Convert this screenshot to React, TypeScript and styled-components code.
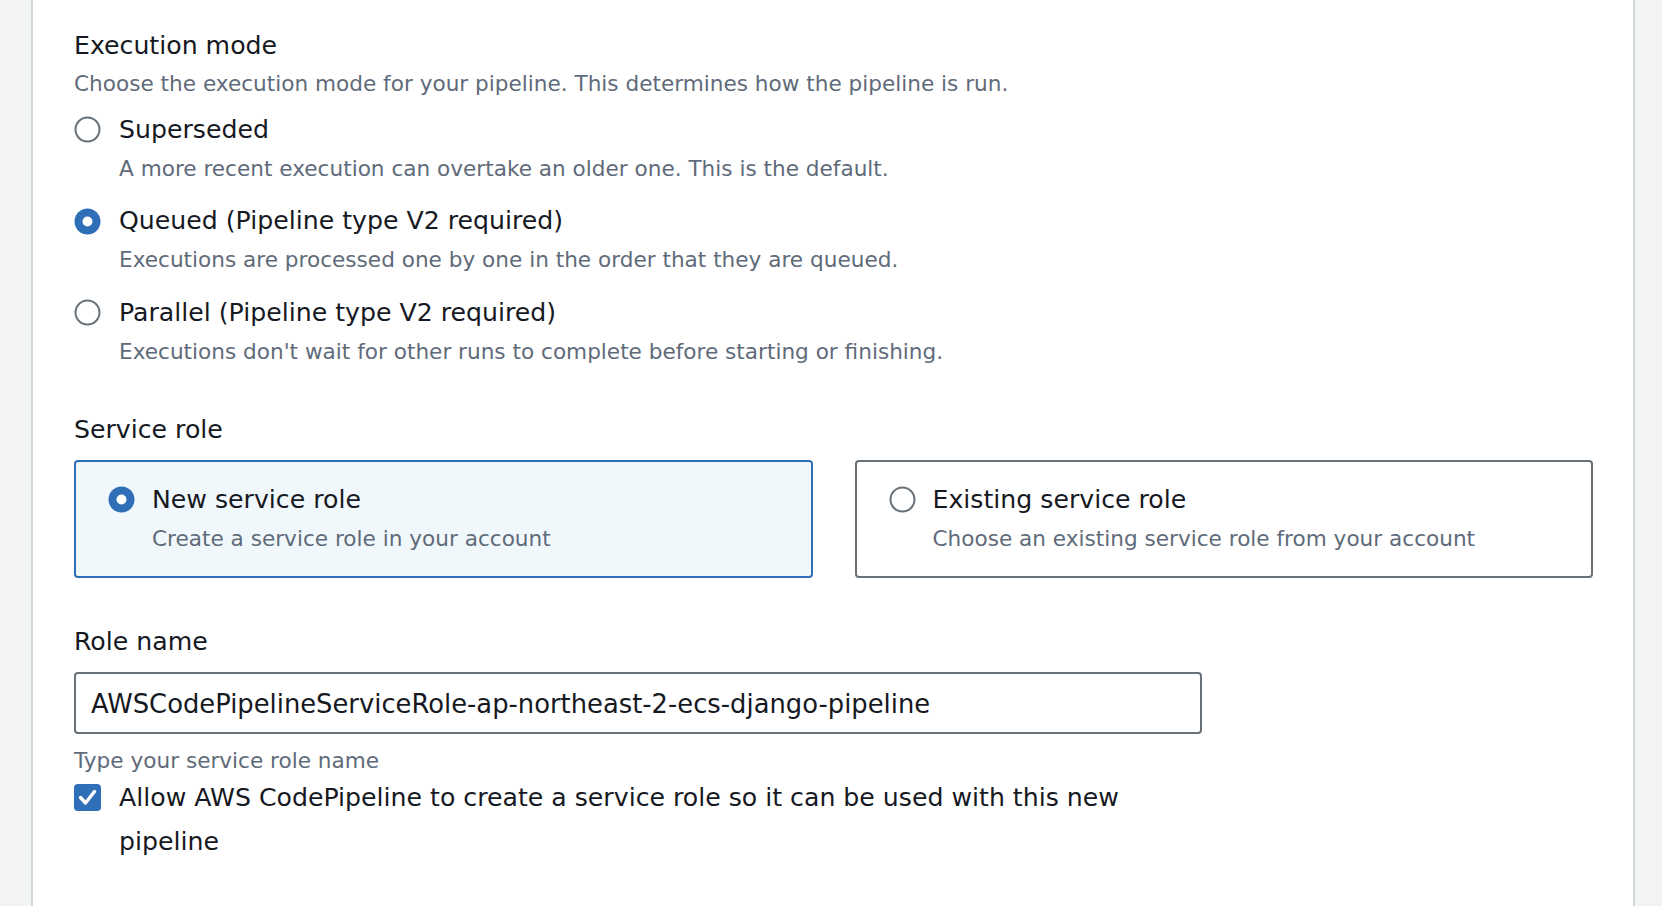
import React from "react";
import styled, { createGlobalStyle } from "styled-components";

const GlobalStyle = createGlobalStyle`
  html, body {
    margin: 0;
    padding: 0;
    background: #f2f3f3;
  }
  body {
    font-family: "DejaVu Sans", "Open Sans", Arial, sans-serif;
    color: #16191f;
    -webkit-font-smoothing: antialiased;
  }
  * { box-sizing: border-box; }
`;

const Page = styled.div`
  display: flex;
  padding: 0 27px 0 31px;
  min-height: 906px;
  overflow: hidden;
`;

const Panel = styled.main`
  flex: 1;
  background: #ffffff;
  border-left: 2px solid #d3d7da;
  border-right: 2px solid #d3d7da;
  padding: 26px 40px 0 41px;
  min-height: 906px;
`;

const Section = styled.section<{ $gap?: number }>`
  display: flex;
  flex-direction: column;
  margin-top: ${(p) => p.$gap ?? 0}px;
`;

const Label = styled.div`
  font-size: 25.2px;
  line-height: 40px;
  margin-bottom: -2px;
  color: #16191f;
`;

const Description = styled.div<{ $lh?: number }>`
  font-size: 21.6px;
  line-height: ${(p) => p.$lh ?? 39}px;
  color: #5f6b7a;
`;

const RadioGroup = styled.div`
  display: flex;
  flex-direction: column;
  gap: 14.5px;
  margin-top: 7.5px;
`;

const OptionRow = styled.label`
  display: grid;
  grid-template-columns: 26px 1fr;
  column-gap: 19px;
  align-items: center;
  cursor: pointer;
`;

const OptionText = styled.div`
  font-size: 25.2px;
  line-height: 38px;
  color: #16191f;
`;

const OptionDesc = styled(Description)`
  grid-column: 2;
`;

const Tiles = styled.div`
  display: grid;
  grid-template-columns: 1fr 1fr;
  column-gap: 42px;
  margin-top: 12px;
`;

const Tile = styled.div<{ $selected?: boolean }>`
  border: 2px solid ${(p) => (p.$selected ? "#2f6fb7" : "#687078")};
  background: ${(p) => (p.$selected ? "#f1f8fc" : "#ffffff")};
  border-radius: 4px;
  padding: 19px 20px 17px 32px;
  height: 118px;
`;

const TileRow = styled(OptionRow)`
  column-gap: 18px;
`;

const InputBox = styled.div`
  margin-top: 12px;
  width: 1128px;
  height: 62px;
  border: 2px solid #687078;
  border-radius: 4px;
  padding: 2px 15px 0;
  display: flex;
  align-items: center;
  font-size: 25.8px;
  color: #16191f;
`;

const Help = styled(Description)`
  margin-top: 12px;
`;

const CheckRow = styled.label`
  display: grid;
  grid-template-columns: 27px 1fr;
  column-gap: 18px;
  align-items: start;
  width: 1128px;
`;

const CheckText = styled.div`
  font-size: 25.2px;
  line-height: 44.5px;
  color: #16191f;
`;

const IconWrap = styled.span`
  display: inline-flex;
  width: 27px;
  height: 27px;
`;

const CheckIconWrap = styled(IconWrap)`
  margin-top: 8.5px;
`;

const Radio = ({ checked }: { checked?: boolean }) => (
  <IconWrap>
    <svg width="27" height="27" viewBox="0 0 27 27">
      {checked ? (
        <>
          <circle cx="13.5" cy="13.5" r="13" fill="#2f6fb7" />
          <circle cx="13.5" cy="13.5" r="5" fill="#ffffff" />
        </>
      ) : (
        <circle cx="13.5" cy="13.5" r="12" fill="#ffffff" stroke="#687078" strokeWidth="2" />
      )}
    </svg>
  </IconWrap>
);

const Checkbox = () => (
  <CheckIconWrap>
    <svg width="27" height="27" viewBox="0 0 27 27">
      <rect x="0" y="0" width="27" height="27" rx="4" fill="#2f6fb7" />
      <polyline
        points="6.5,13.5 11.5,19 20.5,7.5"
        fill="none"
        stroke="#ffffff"
        strokeWidth="3.4"
        strokeLinecap="round"
        strokeLinejoin="round"
      />
    </svg>
  </CheckIconWrap>
);

const modes = [
  {
    title: "Superseded",
    desc: "A more recent execution can overtake an older one. This is the default.",
    checked: false,
  },
  {
    title: "Queued (Pipeline type V2 required)",
    desc: "Executions are processed one by one in the order that they are queued.",
    checked: true,
  },
  {
    title: "Parallel (Pipeline type V2 required)",
    desc: "Executions don't wait for other runs to complete before starting or finishing.",
    checked: false,
  },
];

export default function App() {
  return (
    <>
      <GlobalStyle />
      <Page>
        <Panel>
          <Section>
            <Label>Execution mode</Label>
            <Description>
              Choose the execution mode for your pipeline. This determines how the pipeline is run.
            </Description>
            <RadioGroup>
              {modes.map((m) => (
                <OptionRow key={m.title}>
                  <Radio checked={m.checked} />
                  <OptionText>{m.title}</OptionText>
                  <OptionDesc>{m.desc}</OptionDesc>
                </OptionRow>
              ))}
            </RadioGroup>
          </Section>

          <Section $gap={39}>
            <Label>Service role</Label>
            <Tiles>
              <Tile $selected>
                <TileRow>
                  <Radio checked />
                  <OptionText>New service role</OptionText>
                  <OptionDesc>Create a service role in your account</OptionDesc>
                </TileRow>
              </Tile>
              <Tile>
                <TileRow>
                  <Radio />
                  <OptionText>Existing service role</OptionText>
                  <OptionDesc>Choose an existing service role from your account</OptionDesc>
                </TileRow>
              </Tile>
            </Tiles>
          </Section>

          <Section $gap={44}>
            <Label>Role name</Label>
            <InputBox>AWSCodePipelineServiceRole-ap-northeast-2-ecs-django-pipeline</InputBox>
            <Help $lh={30}>Type your service role name</Help>
            <CheckRow>
              <Checkbox />
              <CheckText>
                Allow AWS CodePipeline to create a service role so it can be used with this new pipeline
              </CheckText>
            </CheckRow>
          </Section>
        </Panel>
      </Page>
    </>
  );
}
